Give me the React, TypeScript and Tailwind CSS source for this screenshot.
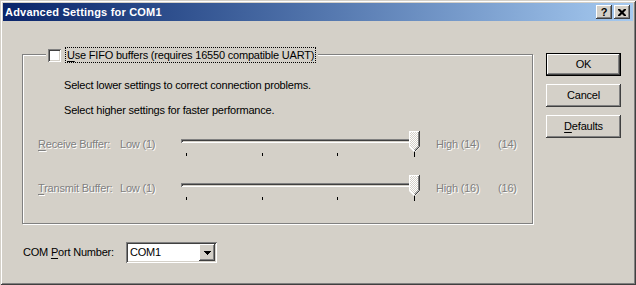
import React from "react";

const raised =
  "shadow-[inset_-1px_-1px_0_#404040,inset_1px_1px_0_#ffffff,inset_-2px_-2px_0_#808080,inset_2px_2px_0_#d4d0c8]";
const sunken =
  "shadow-[inset_1px_1px_0_#808080,inset_-1px_-1px_0_#ffffff,inset_2px_2px_0_#404040,inset_-2px_-2px_0_#d4d0c8]";
const disabled = "text-[#808080] [text-shadow:1px_1px_0_#ffffff]";

function CaptionButton({ children }: { children: React.ReactNode }) {
  return (
    <div className={`flex h-[14px] w-[16px] items-center justify-center bg-[#d4d0c8] ${raised}`}>
      {children}
    </div>
  );
}

function PushButton({ children, isDefault }: { children: React.ReactNode; isDefault?: boolean }) {
  if (isDefault) {
    return (
      <div className="h-[23px] w-[75px] border border-black">
        <div className={`flex h-full w-full items-center justify-center bg-[#d4d0c8] ${raised}`}>
          {children}
        </div>
      </div>
    );
  }
  return (
    <div className={`flex h-[23px] w-[75px] items-center justify-center bg-[#d4d0c8] ${raised}`}>
      {children}
    </div>
  );
}

function Thumb() {
  return (
    <svg width="11" height="26" viewBox="0 0 11 26" className="absolute left-[228px] top-0">
      <defs>
        <pattern id="chk" width="2" height="2" patternUnits="userSpaceOnUse">
          <rect width="2" height="2" fill="#d4d0c8" />
          <rect width="1" height="1" fill="#ffffff" />
          <rect x="1" y="1" width="1" height="1" fill="#ffffff" />
        </pattern>
      </defs>
      <polygon points="0,0 11,0 11,16 5.5,21.5 0,16" fill="url(#chk)" />
      <path d="M0.5 16 V0.5 H10" stroke="#ffffff" fill="none" />
      <path d="M0.5 15.5 L5.5 20.5" stroke="#ffffff" fill="none" />
      <path d="M10.5 0 V15.5 L5.5 20.5" stroke="#404040" fill="none" />
      <path d="M9.5 1 V15 L5.5 19" stroke="#808080" fill="none" />
      <rect x="5" y="21" width="1" height="5" fill="#000000" />
    </svg>
  );
}

function Slider() {
  return (
    <div className="relative h-[26px] w-[240px]">
      <div className="pt-[8px]">
        <div className="h-[4px] w-[238px] bg-[#d4d0c8] shadow-[inset_1px_1px_0_#808080,inset_-1px_-1px_0_#ffffff,inset_2px_2px_0_#404040]" />
      </div>
      <div className="mt-[10px] flex pl-[5px]">
        <div className="h-[3px] w-[1px] bg-black" />
        <div className="ml-[75px] h-[3px] w-[1px] bg-black" />
        <div className="ml-[74px] h-[3px] w-[1px] bg-black" />
      </div>
      <Thumb />
    </div>
  );
}

function SliderRow({ access, rest, value }: { access: string; rest: string; value: number }) {
  return (
    <div className={`flex items-start pl-[15px] ${disabled}`}>
      <div className="w-[82px] pt-[7px]">
        <span className="underline underline-offset-[2px]">{access}</span>
        {rest}
      </div>
      <div className="w-[61px] pt-[7px]">Low (1)</div>
      <Slider />
      <div className="ml-[15px] w-[62px] pt-[7px]">High ({value})</div>
      <div className="pt-[7px]">({value})</div>
    </div>
  );
}

export default function App() {
  return (
    <div className="relative flex h-[285px] w-[636px] flex-col bg-[#d4d0c8] p-[3px] font-['Liberation_Sans',Arial,sans-serif] text-[11px] leading-[13px] text-black shadow-[inset_1px_1px_0_#d4d0c8,inset_-1px_-1px_0_#404040,inset_2px_2px_0_#ffffff,inset_-2px_-2px_0_#808080]">
      <div className="flex h-[18px] items-center bg-gradient-to-r from-[#0a246a] to-[#a6caf0] pl-[2px] pr-[3px]">
        <div className="flex-1 font-bold tracking-[0.2px] text-white">Advanced Settings for COM1</div>
        <div className="flex gap-[2px]">
          <CaptionButton>
            <span className="text-[11px] font-bold leading-none text-black">?</span>
          </CaptionButton>
          <CaptionButton>
            <svg width="8" height="7" viewBox="0 0 8 7">
              <path d="M0 0h2l2 2 2-2h2v1l-2.5 2.5L8 6v1H6L4 5 2 7H0V6l2.5-2.5L0 1z" fill="#000" />
            </svg>
          </CaptionButton>
        </div>
      </div>

      <div className="flex tracking-[-0.2px]">
        <div className="pl-[19px] pt-[33px]">
          <div className="relative h-[170px] w-[511px] border border-[#808080] shadow-[inset_1px_1px_0_#ffffff,1px_1px_0_#ffffff]">
            <div className="absolute left-[23px] top-[-8px] flex h-[16px] items-center bg-[#d4d0c8] px-[2px]">
              <div className={`h-[13px] w-[13px] bg-white ${sunken}`} />
              <div className="ml-[4px] border border-dotted border-black px-[1px] leading-[14px]">
                <span className="underline underline-offset-[2px]">U</span>se FIFO buffers (requires 16550 compatible UART)
              </div>
            </div>
            <p className="ml-[41px] mt-[24px]">Select lower settings to correct connection problems.</p>
            <p className="ml-[41px] mt-[12px]">Select higher settings for faster performance.</p>
            <div className="mt-[14px]">
              <SliderRow access="R" rest="eceive Buffer:" value={14} />
            </div>
            <div className="mt-[18px]">
              <SliderRow access="T" rest="ransmit Buffer:" value={16} />
            </div>
          </div>

          <div className="mt-[18px] flex items-center pl-[1px]">
            <div className="w-[103px]">
              COM <span className="underline underline-offset-[2px]">P</span>ort Number:
            </div>
            <div className={`flex h-[21px] w-[91px] items-center bg-white p-[2px] ${sunken}`}>
              <div className="flex-1 pl-[2px]">COM1</div>
              <div className={`flex h-[17px] w-[16px] items-center justify-center bg-[#d4d0c8] ${raised}`}>
                <svg width="7" height="4" viewBox="0 0 7 4">
                  <path d="M0 0h7v1H6v1H5v1H4v1H3V3H2V2H1V1H0z" fill="#000" />
                </svg>
              </div>
            </div>
          </div>
        </div>

        <div className="ml-[13px] flex flex-col gap-[8px] pt-[32px]">
          <PushButton isDefault>OK</PushButton>
          <PushButton>Cancel</PushButton>
          <PushButton>
            <span>
              <span className="underline underline-offset-[2px]">D</span>efaults
            </span>
          </PushButton>
        </div>
      </div>
    </div>
  );
}
